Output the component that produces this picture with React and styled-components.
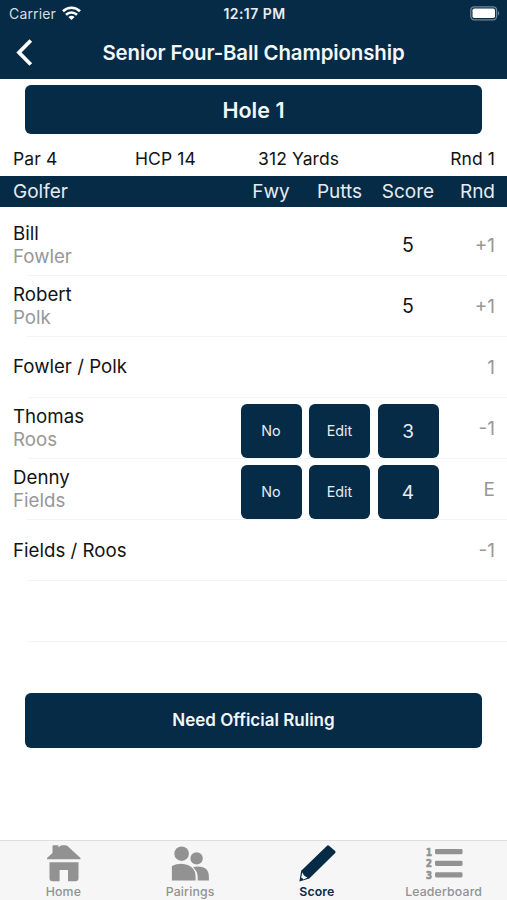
import React from "react";
import styled, { createGlobalStyle } from "styled-components";

const color = {
  navy: "#052b46",
  white: "#ffffff",
  text: "#131313",
  muted: "#979797",
  line: "#f4f4f4",
  tabBar: "#f6f6f6",
  tabIcon: "#929292"
};

const GlobalStyle = createGlobalStyle`
  body {
    margin: 0;
    background-color: ${color.white};
    font-family: Inter, "Liberation Sans", sans-serif;
    color: ${color.text};
  }

  * {
    box-sizing: border-box;
  }

  button {
    border: 0;
    padding: 0;
    font-family: inherit;
  }
`;

const Screen = styled.div`
  display: flex;
  flex-direction: column;
  width: 507px;
  height: 900px;
  overflow: hidden;
`;

const Header = styled.header`
  height: 79px;
  background-color: ${color.navy};
  color: ${color.white};
`;

const StatusBar = styled.div`
  display: grid;
  grid-template-columns: 1fr auto 1fr;
  align-items: center;
  height: 27px;
  padding: 0 7px 0 9px;
  font-size: 14px;
`;

const Carrier = styled.div`
  display: flex;
  align-items: center;
  gap: 6px;
  color: #d5dde4;
  letter-spacing: 0.15px;
`;

const Clock = styled.div`
  font-weight: 600;
  font-size: 14px;
  letter-spacing: 0.45px;
  color: #e8edf2;
`;

const StyledBattery = styled.svg`
  display: block;
  justify-self: end;
`;

const NavBar = styled.div`
  display: grid;
  grid-template-columns: 60px 1fr 60px;
  align-items: center;
  height: 50px;
`;

const BackButton = styled.button`
  display: flex;
  padding-left: 15px;
  background: none;
`;

const Title = styled.h1`
  margin: 0;
  text-align: center;
  white-space: nowrap;
  font-size: 20.4px;
  font-weight: 600;
  letter-spacing: -0.1px;
  color: #f4f7fa;
`;

const WideButton = styled.button`
  flex: none;
  height: ${props => props.$height}px;
  margin: ${props => props.$margin};
  border-radius: 6px;
  background-color: ${color.navy};
  color: #f4f7fa;
  font-size: ${props => props.$size}px;
  font-weight: 600;
`;

const HoleInfo = styled.div`
  display: grid;
  grid-template-columns: 122px 123px 1fr auto;
  align-items: center;
  height: 41.5px;
  padding: 8px 12px 0 13px;
  font-size: 17.5px;
  letter-spacing: 0.1px;
`;

const columns = `
  display: grid;
  grid-template-columns: 227px 61px 61px 61px 1fr;
  column-gap: 7.5px;
  padding-right: 12px;
`;

const TableHead = styled.div`
  ${columns}
  align-items: center;
  height: 31.5px;
  padding-left: 6px;
  background-color: ${color.navy};
  color: #e6ecf1;
  font-size: 19px;
`;

const HeadCell = styled.div`
  text-align: ${props => props.$align || "center"};
  padding-left: ${props => (props.$align === "left" ? 7 : 0)}px;
  white-space: nowrap;
`;

const List = styled.div`
  padding-top: 7.5px;
`;

const Row = styled.div`
  ${columns}
  height: 61.1px;
  padding-left: 6px;
  align-items: center;
  background: linear-gradient(${color.line}, ${color.line}) 27px 100% / 100% 1px no-repeat;
`;

const Golfer = styled.div`
  padding-left: 7px;
  font-size: 18.7px;
  line-height: 23.5px;
  white-space: nowrap;
`;

const LastName = styled.div`
  color: ${color.muted};
`;

const ScoreValue = styled.div`
  grid-column: 4;
  text-align: center;
  font-size: 19.5px;
`;

const CellButton = styled.button`
  align-self: end;
  height: 54px;
  margin-bottom: 1px;
  border-radius: 6px;
  background-color: ${color.navy};
  color: #e6ecf1;
  font-size: ${props => (props.$large ? 19 : 14.3)}px;
  line-height: ${props => (props.$large ? "56px" : "normal")};
`;

const RoundValue = styled.div`
  grid-column: 5;
  text-align: right;
  color: ${color.muted};
  font-size: 19px;
`;

const TabBar = styled.nav`
  display: grid;
  grid-template-columns: repeat(4, 1fr);
  height: 60.5px;
  margin-top: auto;
  border-top: 1.5px solid #dedede;
  background-color: ${color.tabBar};
`;

const Tab = styled.a`
  display: flex;
  flex-direction: column;
  align-items: center;
  padding-top: 3px;
  color: ${props => (props.$active ? color.navy : color.tabIcon)};
  font-size: 12.3px;
  font-weight: ${props => (props.$active ? 600 : 500)};
  line-height: 16px;
  letter-spacing: 0.15px;
`;

const TabIcon = styled.svg`
  display: block;
  width: 40px;
  height: 40px;
  fill: currentColor;
`;

const WifiIcon = () => (
  <svg width="19" height="15" viewBox="0 0 19 15" fill="none" stroke="#fff" strokeWidth="2.6">
    <path d="M1 5.2C5.8.5 13.2.5 18 5.2" />
    <path d="M4 8.8C7.2 5.7 11.8 5.7 15 8.8" />
    <path d="M9.500 14L6.400 10.900C8.200 9.300 10.800 9.300 12.600 10.900Z" fill="#fff" stroke="none" />
  </svg>
);

const BatteryIcon = () => (
  <StyledBattery width="30" height="15" viewBox="0 0 30 15">
    <rect x=".8" y=".8" width="25.8" height="13" rx="3.5" fill="none" stroke="#71869a" strokeWidth="1.3" />
    <rect x="2.5" y="2.5" width="22.5" height="9.6" rx="1.8" fill="#fff" />
    <path d="M28 5c1.6.8 1.6 3.8 0 4.6z" fill="#71869a" />
  </StyledBattery>
);

const BackIcon = () => (
  <svg width="18" height="27" viewBox="0 0 18 27" fill="none" stroke="#fff" strokeWidth="3.8">
    <path d="M15.8 1.5L4 13.500L15.8 25.500" />
  </svg>
);

const HomeIcon = () => (
  <TabIcon viewBox="0 0 40 40">
    <path d="M4 14L9.500 9V2Q9.500 1.200 10.500 1.200H14.500Q15.500 1.200 15.500 2V3.500L17 2Q18 1.200 19.500 1.200H22Q23.500 1.200 24.800 2.300L37.500 14V15.300H4Z" />
    <path d="M6.500 18.300H35.500V34.300Q35.500 37.300 32.500 37.300H25V26H16.600V37.300H9.500Q6.500 37.300 6.500 34.300Z" />
  </TabIcon>
);

const PairingsIcon = () => (
  <TabIcon viewBox="0 0 40 40">
    <circle cx="11.6" cy="9.7" r="7.3" />
    <circle cx="26.6" cy="14.4" r="6.2" />
    <path d="M1.900 36.400V22Q6 19.700 11.500 19.700Q25.600 21 25.600 33V36.400Z" />
    <path d="M23 23Q38.900 20.500 38.900 33V36.400H27.700V33Q27.700 27.500 23 23Z" />
  </TabIcon>
);

const PencilIcon = () => (
  <TabIcon viewBox="0 0 40 40">
    <path d="M32.300 1.900L38.200 7Q39 8 38.200 9L12.300 34.500L2.400 37.500L4.200 26.800L29.800 1.900Q31 .8 32.300 1.900Z" />
    <path d="M5.200 28.300L7 31.500L10.500 33.800L6.200 35.500Q5.800 34 4.200 33.800Z" fill={color.tabBar} />
  </TabIcon>
);

const ListIcon = () => (
  <TabIcon viewBox="0 0 40 40">
    <g fontFamily="DejaVu Sans Mono, monospace" fontSize="9.8" fontWeight="700" stroke="currentColor" strokeWidth=".7" textAnchor="middle">
      <text x="5" y="11.6">1</text>
      <text x="5" y="23.2">2</text>
      <text x="5" y="34.8">3</text>
    </g>
    <rect x="11" y="5" width="27.5" height="5.2" rx="1.3" />
    <rect x="11" y="16.7" width="27.5" height="5.2" rx="1.3" />
    <rect x="11" y="28.200" width="27.5" height="5.2" rx="1.3" />
  </TabIcon>
);

const golfers = [
  { first: "Bill", last: "Fowler", score: 5, round: "+1" },
  { first: "Robert", last: "Polk", score: 5, round: "+1" },
  { first: "Fowler / Polk", round: "1" },
  { first: "Thomas", last: "Roos", score: 3, round: "-1", editable: true },
  { first: "Denny", last: "Fields", score: 4, round: "E", editable: true },
  { first: "Fields / Roos", round: "-1" }
];

const tabs = [
  { label: "Home", icon: HomeIcon },
  { label: "Pairings", icon: PairingsIcon },
  { label: "Score", icon: PencilIcon, active: true },
  { label: "Leaderboard", icon: ListIcon }
];

const GolferRow = ({ first, last, score, round, editable }) => (
  <Row>
    <Golfer>
      {first}
      {last && <LastName>{last}</LastName>}
    </Golfer>
    {editable ? (
      <>
        <CellButton>No</CellButton>
        <CellButton>Edit</CellButton>
        <CellButton $large>{score}</CellButton>
      </>
    ) : (
      <ScoreValue>{score}</ScoreValue>
    )}
    <RoundValue>{round}</RoundValue>
  </Row>
);

const App = () => (
  <Screen>
    <GlobalStyle />
    <Header>
      <StatusBar>
        <Carrier>
          Carrier
          <WifiIcon />
        </Carrier>
        <Clock>12:17 PM</Clock>
        <BatteryIcon />
      </StatusBar>
      <NavBar>
        <BackButton aria-label="Back">
          <BackIcon />
        </BackButton>
        <Title>Senior Four-Ball Championship</Title>
      </NavBar>
    </Header>
    <WideButton $height={49} $margin="6px 25px 0" $size={21.5}>
      Hole 1
    </WideButton>
    <HoleInfo>
      <span>Par 4</span>
      <span>HCP 14</span>
      <span>312 Yards</span>
      <span>Rnd 1</span>
    </HoleInfo>
    <TableHead>
      <HeadCell $align="left">Golfer</HeadCell>
      <HeadCell>Fwy</HeadCell>
      <HeadCell>Putts</HeadCell>
      <HeadCell>Score</HeadCell>
      <HeadCell $align="right">Rnd</HeadCell>
    </TableHead>
    <List>
      {golfers.map(golfer => (
        <GolferRow key={golfer.first} {...golfer} />
      ))}
      <Row />
    </List>
    <WideButton $height={54.5} $margin="51px 25px 0" $size={17}>
      Need Official Ruling
    </WideButton>
    <TabBar>
      {tabs.map(({ label, icon: Icon, active }) => (
        <Tab key={label} $active={active}>
          <Icon />
          {label}
        </Tab>
      ))}
    </TabBar>
  </Screen>
);

export default App;
